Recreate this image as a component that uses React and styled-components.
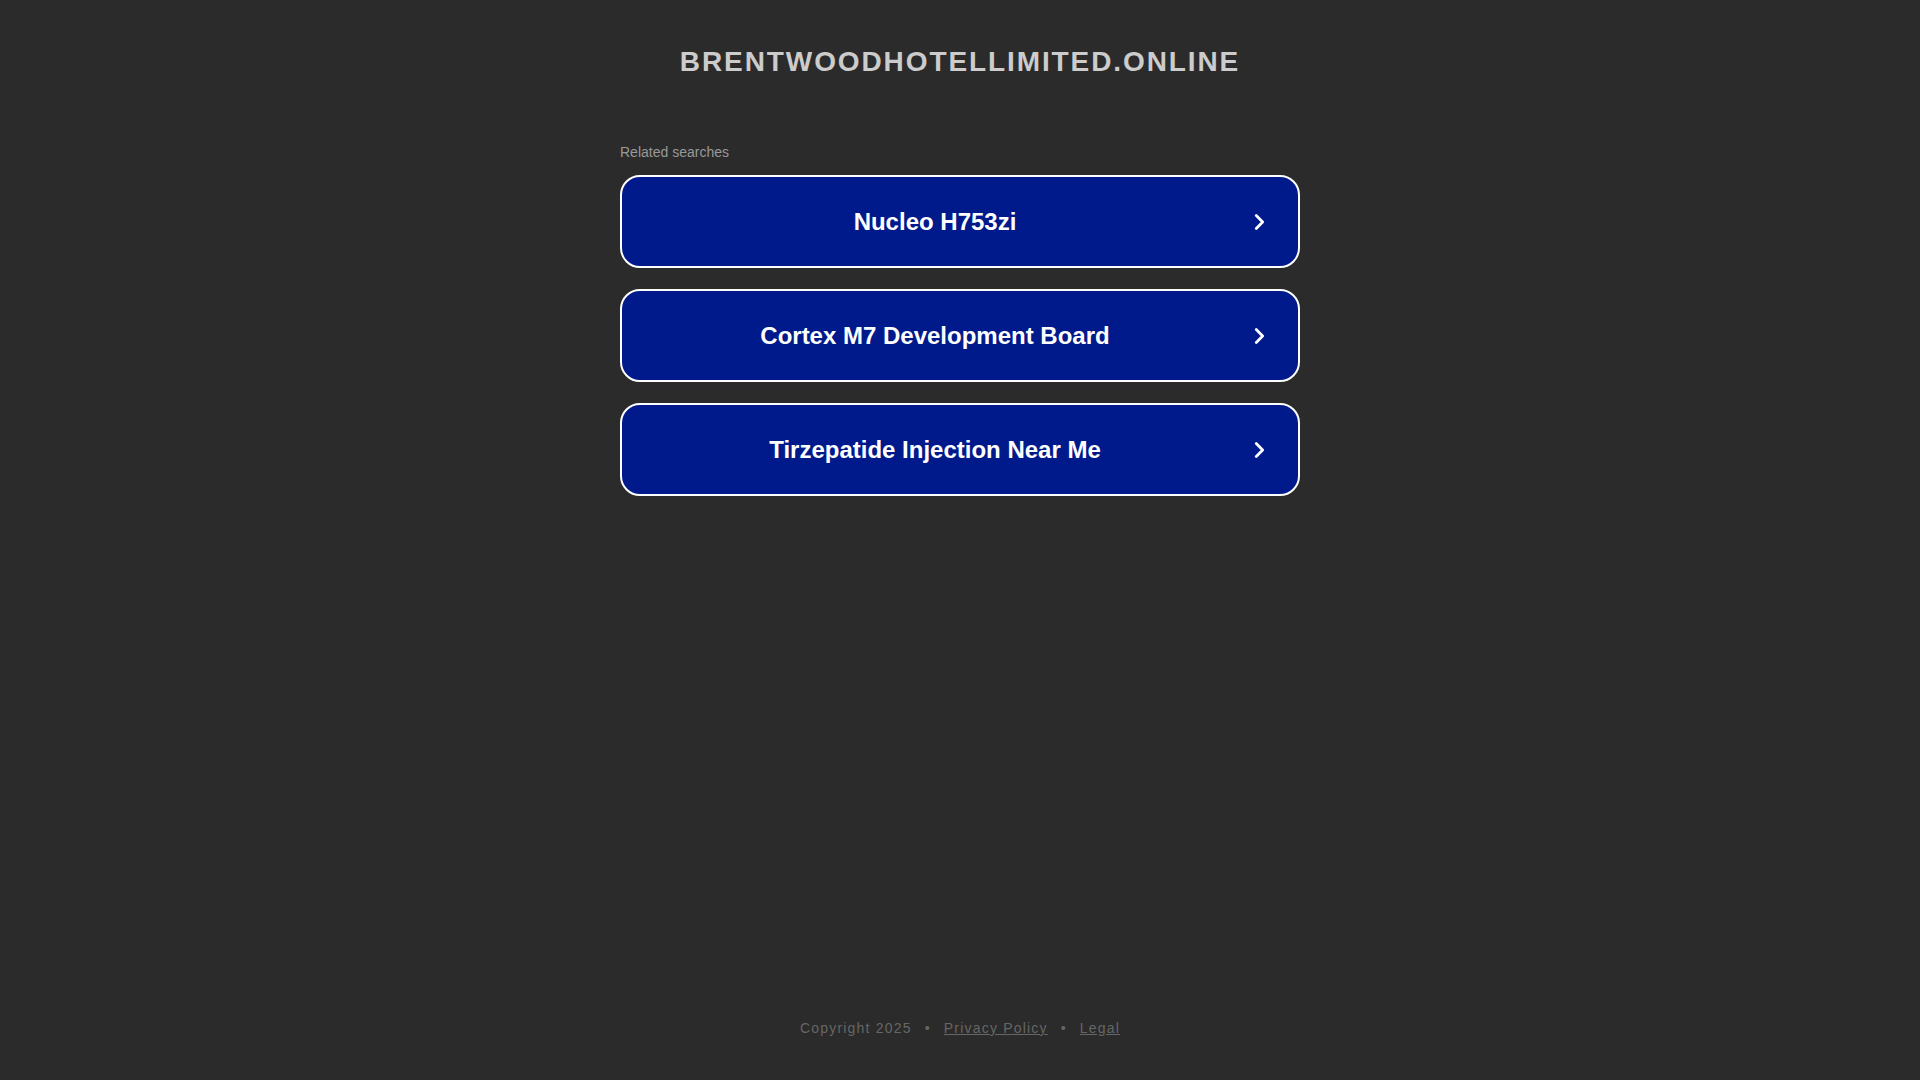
import React from 'react'
import styled, { createGlobalStyle } from 'styled-components'

const GlobalStyle = createGlobalStyle`
  html, body {
    margin: 0;
    padding: 0;
    background: #2b2b2b;
    font-family: "Liberation Sans", Arial, sans-serif;
  }
`

const Page = styled.div`
  min-height: 1080px;
  display: flex;
  flex-direction: column;
  align-items: center;
`

const Title = styled.h1`
  margin: 45px 0 0;
  font-size: 28px;
  line-height: 34px;
  font-weight: 700;
  letter-spacing: 1.9px;
  color: #cccccc;
  text-align: center;
`

const Main = styled.div`
  width: 680px;
  margin-top: 65px;
  display: flex;
  flex-direction: column;
`

const Label = styled.div`
  font-size: 14px;
  line-height: 16px;
  color: #999999;
  margin-bottom: 15px;
`

const List = styled.div`
  display: flex;
  flex-direction: column;
  gap: 21px;
`

const Item = styled.a`
  position: relative;
  display: flex;
  align-items: center;
  justify-content: center;
  box-sizing: border-box;
  height: 93px;
  padding: 0 70px 0 20px;
  border: 2px solid #ffffff;
  border-radius: 20px;
  background: #011a8b;
  color: #ffffff;
  font-size: 24px;
  font-weight: 700;
  text-decoration: none;
  cursor: pointer;
`

const Chevron = styled.svg`
  position: absolute;
  right: 28px;
  top: 50%;
  width: 22px;
  height: 22px;
  margin-top: -11px;
`

const Footer = styled.div`
  margin-top: auto;
  margin-bottom: 44px;
  display: flex;
  align-items: center;
  gap: 13px;
  font-size: 14px;
  letter-spacing: 1.2px;
  color: #666666;
`

const FooterLink = styled.a`
  color: #666666;
  text-decoration: underline;
`

const searches = ['Nucleo H753zi', 'Cortex M7 Development Board', 'Tirzepatide Injection Near Me']

export default function App() {
  return (
    <Page>
      <GlobalStyle />
      <Title>BRENTWOODHOTELLIMITED.ONLINE</Title>
      <Main>
        <Label>Related searches</Label>
        <List>
          {searches.map((s) => (
            <Item key={s}>
              {s}
              <Chevron viewBox="0 0 24 24" fill="none" stroke="#fff" strokeWidth="3" strokeLinecap="round" strokeLinejoin="round">
                <path d="M9 5l7 7-7 7" />
              </Chevron>
            </Item>
          ))}
        </List>
      </Main>
      <Footer>
        <span>Copyright 2025</span>
        <span>•</span>
        <FooterLink>Privacy Policy</FooterLink>
        <span>•</span>
        <FooterLink>Legal</FooterLink>
      </Footer>
    </Page>
  )
}
